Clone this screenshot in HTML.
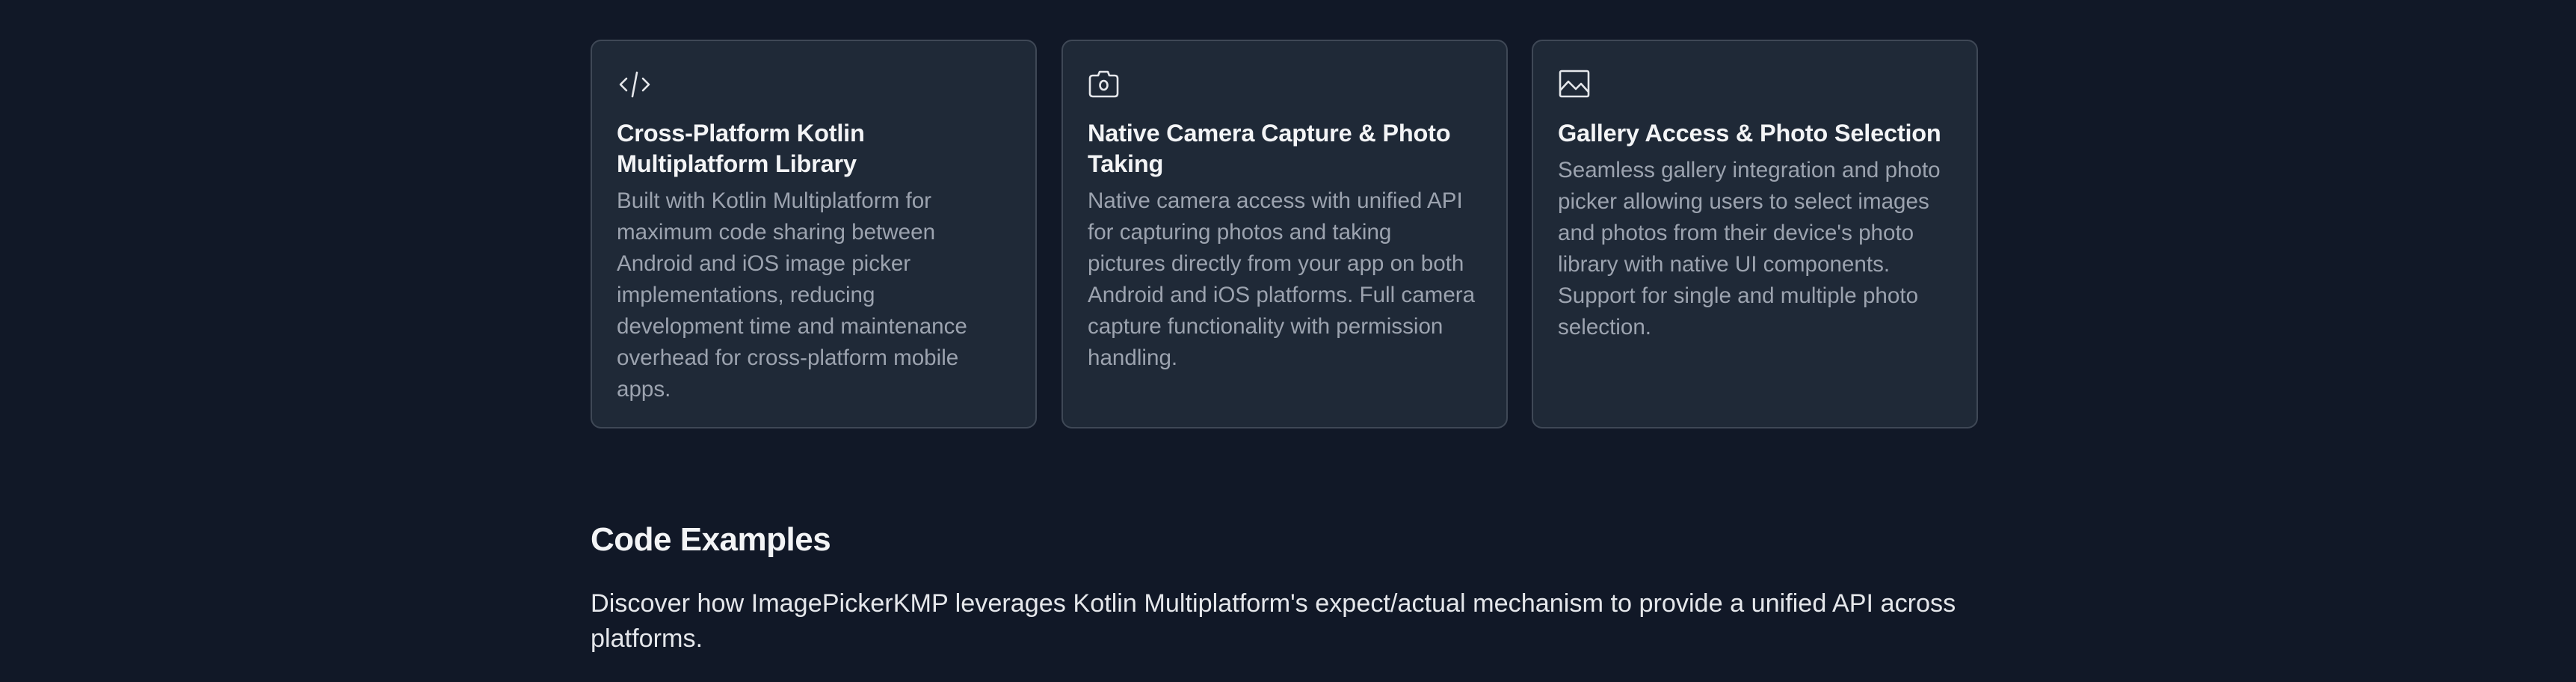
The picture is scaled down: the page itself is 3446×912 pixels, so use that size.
<!DOCTYPE html>
<html><head><meta charset="utf-8"><style>
html,body{margin:0;padding:0;background:#111827;width:3446px;height:912px;overflow:hidden;font-family:"Liberation Sans",Arial,sans-serif;}
.card{position:absolute;top:53px;width:597px;height:520px;background:#1f2937;border:2px solid #3f4856;border-radius:14px;box-sizing:border-box;}
.card svg{position:absolute;left:33px;top:36px;}
.t{position:absolute;left:33px;top:103px;color:#f3f4f6;font-weight:bold;font-size:32.5px;line-height:41px;white-space:nowrap;letter-spacing:-0.2px;}
.b{position:absolute;left:33px;color:#9ca3af;font-size:29.6px;line-height:42px;white-space:nowrap;}
h2{position:absolute;left:790px;top:694px;margin:0;color:#f3f4f6;font-size:44px;font-weight:bold;line-height:56px;letter-spacing:-0.5px;}
p{position:absolute;left:790px;top:784px;margin:0;color:#e5e7eb;font-size:34.2px;line-height:47px;white-space:nowrap;}
</style></head><body>
<div class="card" style="left:790px">
<svg width="48" height="44" viewBox="0 0 48 44" fill="none" stroke="#e5e7eb" stroke-width="2.6" stroke-linecap="round" stroke-linejoin="round"><path d="M13 14 L5 22 L13 30"/><path d="M35 14 L43 22 L35 30"/><path d="M27 6 L21 38"/></svg>
<div class="t">Cross-Platform Kotlin<br>Multiplatform Library</div>
<div class="b" style="top:193px">Built with Kotlin Multiplatform for<br>maximum code sharing between<br>Android and iOS image picker<br>implementations, reducing<br>development time and maintenance<br>overhead for cross-platform mobile<br>apps.</div>
</div>
<div class="card" style="left:1420px">
<svg width="48" height="44" viewBox="0 0 48 44" fill="none" stroke="#e5e7eb" stroke-width="2.6" stroke-linejoin="round"><path d="M7 10 H14 L16 5 H27 L29 10 H36 Q40 10 40 14 V34 Q40 38 36 38 H7 Q3 38 3 34 V14 Q3 10 7 10 Z"/><ellipse cx="21.5" cy="23" rx="5" ry="6"/></svg>
<div class="t">Native Camera Capture &amp; Photo<br>Taking</div>
<div class="b" style="top:193px">Native camera access with unified API<br>for capturing photos and taking<br>pictures directly from your app on both<br>Android and iOS platforms. Full camera<br>capture functionality with permission<br>handling.</div>
</div>
<div class="card" style="left:2049px">
<svg width="48" height="44" viewBox="0 0 48 44" fill="none" stroke="#e5e7eb" stroke-width="2.6" stroke-linejoin="round"><rect x="3" y="4" width="38" height="34" rx="2"/><path d="M3 30 L14 18 L24 28 L31 21 L41 32"/></svg>
<div class="t">Gallery Access &amp; Photo Selection</div>
<div class="b" style="top:152px">Seamless gallery integration and photo<br>picker allowing users to select images<br>and photos from their device's photo<br>library with native UI components.<br>Support for single and multiple photo<br>selection.</div>
</div>
<h2>Code Examples</h2>
<p>Discover how ImagePickerKMP leverages Kotlin Multiplatform's expect/actual mechanism to provide a unified API across<br>platforms.</p>
</body></html>
